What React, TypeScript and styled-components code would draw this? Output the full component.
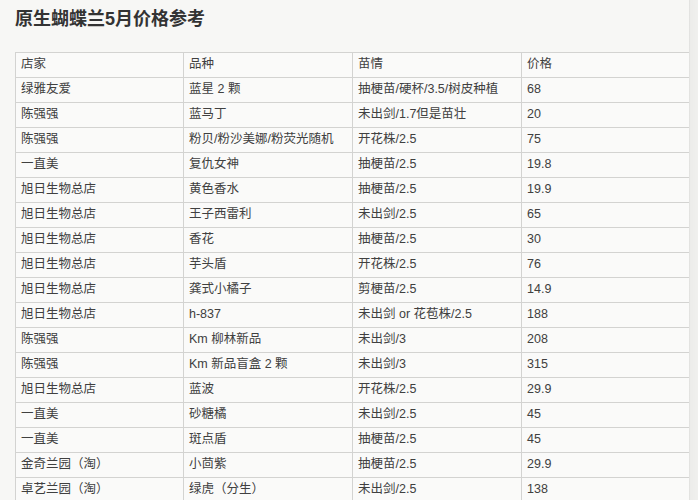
import React from "react";
import styled, { createGlobalStyle } from "styled-components";

const Global = createGlobalStyle`
  html, body { margin: 0; padding: 0; background: #f7f7f5; }
  body {
    font-family: "Liberation Sans", "Noto Sans CJK SC", sans-serif;
    color: #3a3a3a;
    overflow: hidden;
  }
`;

const Page = styled.div`
  display: flex;
  width: 698px;
  height: 500px;
  overflow: hidden;
`;

const Main = styled.div`
  width: 689px;
  padding: 6px 0 0 15px;
  box-sizing: border-box;
`;

const Edge = styled.div`
  width: 9px;
  background: linear-gradient(to right, #d9d9d7 0, #ececea 1px, #f0f0ee 100%);
`;

const Title = styled.h1`
  margin: 0 0 19px 0;
  font-size: 18px;
  line-height: 27px;
  font-weight: 700;
  color: #333;
`;

const Table = styled.table`
  border-collapse: collapse;
  table-layout: fixed;
  width: 674px;
  background: #fafaf9;
`;

const Col = styled.col<{ $w: number }>`
  width: ${(p) => p.$w}px;
`;

const Row = styled.tr`
  height: 25px;
`;

const Cell = styled.td`
  border: 1px solid #d3d3d1;
  padding: 0 0 2px 5px;
  font-size: 12.5px;
  line-height: 15px;
  color: #404040;
  vertical-align: middle;
  white-space: nowrap;
  overflow: hidden;
`;

const widths = [168, 169, 169, 168];

const rows: string[][] = [
  ["绿雅友爱", "蓝星 2 颗", "抽梗苗/硬杯/3.5/树皮种植", "68"],
  ["陈强强", "蓝马丁", "未出剑/1.7但是苗壮", "20"],
  ["陈强强", "粉贝/粉沙美娜/粉荧光随机", "开花株/2.5", "75"],
  ["一直美", "复仇女神", "抽梗苗/2.5", "19.8"],
  ["旭日生物总店", "黄色香水", "抽梗苗/2.5", "19.9"],
  ["旭日生物总店", "王子西雷利", "未出剑/2.5", "65"],
  ["旭日生物总店", "香花", "抽梗苗/2.5", "30"],
  ["旭日生物总店", "芋头盾", "开花株/2.5", "76"],
  ["旭日生物总店", "龚式小橘子", "剪梗苗/2.5", "14.9"],
  ["旭日生物总店", "h-837", "未出剑 or 花苞株/2.5", "188"],
  ["陈强强", "Km 柳林新品", "未出剑/3", "208"],
  ["陈强强", "Km 新品盲盒 2 颗", "未出剑/3", "315"],
  ["旭日生物总店", "蓝波", "开花株/2.5", "29.9"],
  ["一直美", "砂糖橘", "未出剑/2.5", "45"],
  ["一直美", "斑点盾", "抽梗苗/2.5", "45"],
  ["金奇兰园（淘）", "小茴紫", "抽梗苗/2.5", "29.9"],
  ["卓艺兰园（淘）", "绿虎（分生）", "未出剑/2.5", "138"],
];

export default function App() {
  return (
    <Page>
      <Global />
      <Main>
        <Title>原生蝴蝶兰5月价格参考</Title>
        <Table>
          <colgroup>
            {widths.map((w, i) => (
              <Col key={i} $w={w} />
            ))}
          </colgroup>
          <tbody>
            <Row>
              {["店家", "品种", "苗情", "价格"].map((h) => (
                <Cell key={h}>{h}</Cell>
              ))}
            </Row>
            {rows.map((r, i) => (
              <Row key={i}>
                {r.map((c, j) => (
                  <Cell key={j}>{c}</Cell>
                ))}
              </Row>
            ))}
          </tbody>
        </Table>
      </Main>
      <Edge />
    </Page>
  );
}
